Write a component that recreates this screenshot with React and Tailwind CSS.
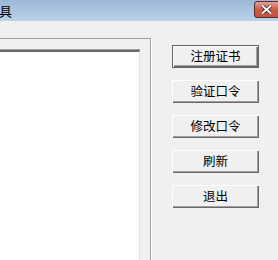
const buttons = ['注册证书', '验证口令', '修改口令', '刷新', '退出'];

const ClassicButton = function ({ label, isDefault }) {
  return (
    <button
      type="button"
      className={
        isDefault
          ? 'h-[23px] w-[87px] border border-[#646464] bg-[#f0f0f0] text-[12.5px] leading-none text-black shadow-[inset_1px_1px_0_#ffffff,inset_-1px_-1px_0_#696969,inset_-2px_-2px_0_#a0a0a0]'
          : 'h-[23px] w-[87px] bg-[#f0f0f0] text-[12.5px] leading-none text-black shadow-[inset_1px_1px_0_#ffffff,inset_-1px_-1px_0_#696969,inset_-2px_-2px_0_#a0a0a0]'
      }
    >
      {label}
    </button>
  );
};

const App = function () {
  return (
    <div
      className="flex h-[260px] w-[278px] flex-col overflow-hidden bg-[#f0f0f0]"
      style={{ fontFamily: '"Noto Sans CJK SC", "Liberation Sans", sans-serif' }}
    >
      <div className="relative flex h-[21px] shrink-0 items-center bg-gradient-to-b from-[#9db7d7] to-[#bad2ea]">
        <span className="ml-[-1px] text-[13px] leading-none text-black">具</span>
        <div className="absolute right-[-6px] top-[1px] flex h-[17px] w-[30px] items-center justify-center rounded-[3px] border border-[#5e2a2a] bg-gradient-to-b from-[#e3a294] via-[#c95a45] to-[#c4533c] pr-[6px]">
          <svg width="11" height="9" viewBox="0 0 11 9">
            <path d="M1.5 1 L9.5 8 M9.5 1 L1.5 8" stroke="#3d2222" strokeWidth="3.4" strokeLinecap="square" />
            <path d="M1.5 1 L9.5 8 M9.5 1 L1.5 8" stroke="#ffffff" strokeWidth="2" strokeLinecap="square" />
          </svg>
        </div>
      </div>

      <div className="flex flex-1">
        <div className="mt-[17px] flex w-[151px] shrink-0 flex-col border-r border-t border-r-[#a0a0a0] border-t-[#a0a0a0] shadow-[1px_0_0_#ffffff]">
          <div className="mt-[11px] w-[140px] flex-1 border-r border-t-2 border-r-[#e3e3e3] border-t-[#696969] bg-white shadow-[0_-1px_0_#a0a0a0]" />
        </div>

        <div className="ml-[21px] mt-[24px] flex flex-col gap-[12px]">
          {buttons.map((label, i) => (
            <ClassicButton key={label} label={label} isDefault={i === 0} />
          ))}
        </div>
      </div>
    </div>
  );
};

export default App;
